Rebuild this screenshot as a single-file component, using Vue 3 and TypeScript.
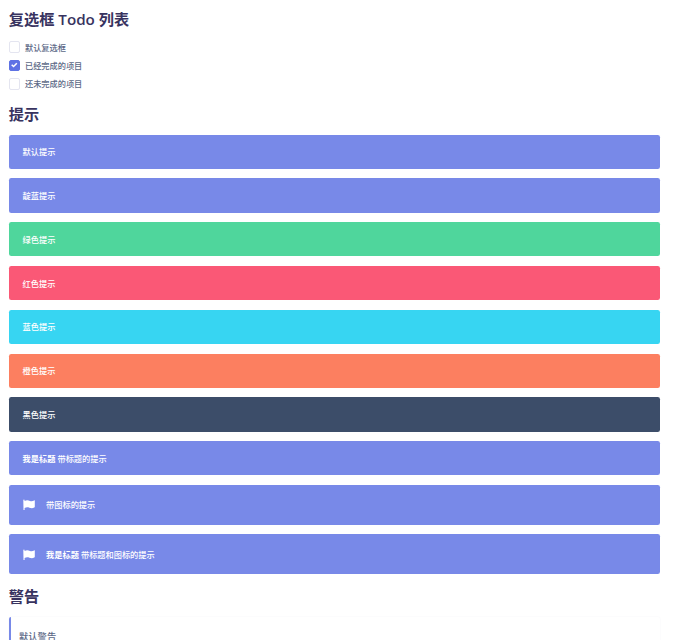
<script setup lang="ts">
import { ref } from 'vue'

interface Todo {
  label: string
  done: boolean
}

interface Alert {
  tone: string
  text: string
  title?: string
  icon?: boolean
}

const todos = ref<Todo[]>([
  { label: '默认复选框', done: false },
  { label: '已经完成的项目', done: true },
  { label: '还未完成的项目', done: false },
])

const alerts: Alert[] = [
  { tone: 'indigo', text: '默认提示' },
  { tone: 'indigo', text: '靛蓝提示' },
  { tone: 'green', text: '绿色提示' },
  { tone: 'red', text: '红色提示' },
  { tone: 'blue', text: '蓝色提示' },
  { tone: 'orange', text: '橙色提示' },
  { tone: 'black', text: '黑色提示' },
  { tone: 'indigo', title: '我是标题', text: '带标题的提示' },
  { tone: 'indigo', text: '带图标的提示', icon: true },
  { tone: 'indigo', title: '我是标题', text: '带标题和图标的提示', icon: true },
]
</script>

<template>
  <main class="page">
    <h2 class="heading">复选框 Todo 列表</h2>
    <ul class="todos">
      <li v-for="todo in todos" :key="todo.label">
        <label class="todo">
          <input v-model="todo.done" class="native" type="checkbox" />
          <span class="box" :class="{ checked: todo.done }">
            <svg v-if="todo.done" class="tick" viewBox="0 0 8 8">
              <path d="M6.6 0.9 L8 2.2 L3.2 7 L0.2 4.2 L1.5 2.9 L3.2 4.4 Z" />
            </svg>
          </span>
          <span class="label">{{ todo.label }}</span>
        </label>
      </li>
    </ul>

    <h2 class="heading">提示</h2>
    <section class="alerts">
      <div
        v-for="(alert, i) in alerts"
        :key="i"
        class="alert"
        :class="[alert.tone, { tall: alert.icon }]"
      >
        <svg v-if="alert.icon" class="flag" viewBox="0 0 12 12">
          <path d="M0.3 1.2 C0.3 0.4 1.6 0.4 1.6 1.2 V1.9 C4 0.8 5.4 1.4 7 2 C8.6 2.5 9.8 2.1 11.2 1.4 C11.6 1.3 11.8 1.5 11.8 1.8 V7.8 C11.8 8.2 11.6 8.4 11.2 8.6 C9.4 9.5 8 9.2 6.4 8.7 C4.7 8.1 3.2 8.2 1.6 8.9 V11 H0.5 Z" />
        </svg>
        <span><strong v-if="alert.title">{{ alert.title }}</strong>{{ alert.title ? ' ' : '' }}{{ alert.text }}</span>
      </div>
    </section>

    <h2 class="heading">警告</h2>
    <div class="admonition">默认警告</div>
  </main>
</template>

<style>
body {
  background: #fff;
  overflow: hidden;
}
</style>

<style scoped>
.page {
  height: 640px;
  overflow: hidden;
  box-sizing: border-box;
  padding: 8.6px 15.3px 0 8.8px;
  font-family: "Open Sans", "Noto Sans CJK SC", sans-serif;
  font-size: 8.2px;
  color: #5a6785;
}

.heading {
  margin: 0;
  height: 20px;
  font-size: 15.2px;
  line-height: 20px;
  font-weight: 600;
  color: #38335f;
}

.todos {
  list-style: none;
  margin: 0;
  padding: 9.6px 0 10.5px;
}

.todo {
  display: flex;
  align-items: center;
  gap: 4.5px;
  height: 18.3px;
}

.label {
  line-height: 12px;
  padding-top: 0.9px;
  font-weight: 500;
}

.native {
  display: none;
}

.box {
  display: flex;
  align-items: center;
  justify-content: center;
  box-sizing: border-box;
  width: 11.7px;
  height: 11.7px;
  border: 0.6px solid #e4e5f0;
  border-radius: 2px;
  background: #fff;
}

.box.checked {
  border-color: #5e72e4;
  background: #5e72e4;
}

.tick {
  width: 6.4px;
  height: 6.4px;
  fill: #fff;
}

.alerts {
  display: grid;
  gap: 9.6px;
  padding: 11.1px 0 12.2px;
}

.alert {
  display: flex;
  align-items: center;
  box-sizing: border-box;
  height: 34.2px;
  padding: 1px 13.8px 0;
  border-radius: 2.3px;
  line-height: 12px;
  font-weight: 500;
  color: #fff;
}

.alert.tall {
  height: 39.8px;
}

.alert strong {
  font-weight: 700;
}

.flag {
  width: 12px;
  height: 12px;
  margin-right: 11.5px;
  fill: #fff;
}

.indigo {
  background: #7889e8;
}

.green {
  background: #4fd69c;
}

.red {
  background: #fa5876;
}

.blue {
  background: #37d5f2;
}

.orange {
  background: #fc7f60;
}

.black {
  background: #3c4d69;
}

.admonition {
  margin-top: 10.4px;
  padding: 12px 8.2px;
  height: 40px;
  border-left: 2px solid #7889e8;
  border-radius: 2px;
  box-shadow: 0 0 2px rgba(50, 50, 93, 0.05);
  font-size: 9.3px;
  line-height: 15px;
  font-weight: 500;
}
</style>
